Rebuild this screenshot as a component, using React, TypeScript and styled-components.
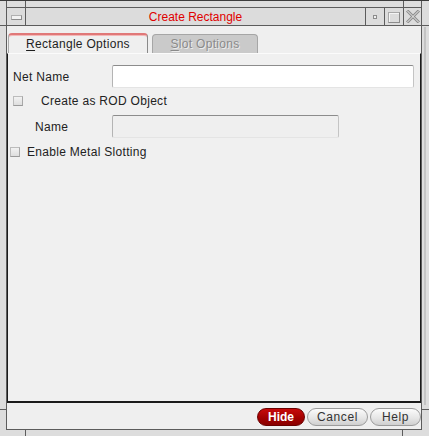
import React from "react";
import styled, { createGlobalStyle } from "styled-components";

const Global = createGlobalStyle`
  html, body { margin: 0; padding: 0; background: #dcdcdc; }
  body { font-family: "Liberation Sans", Arial, sans-serif; font-size: 12px; letter-spacing: 0.3px; }
  * { box-sizing: border-box; }
`;

const tick = (x: string, y: string, w: string, h: string) =>
  `linear-gradient(#5c5c5c, #5c5c5c) ${x} ${y} / ${w} ${h} no-repeat`;

const Window = styled.div`
  width: 429px;
  height: 436px;
  border-top: 1px solid #3c3c3c;
  padding: 6px 7px 6px 6px;
  background:
    ${tick("6px", "0", "1px", "7px")},
    ${tick("25px", "0", "1px", "7px")},
    ${tick("403px", "0", "1px", "7px")},
    ${tick("421px", "0", "1px", "7px")},
    ${tick("0", "24px", "6px", "1px")},
    ${tick("0", "408px", "6px", "1px")},
    ${tick("422px", "24px", "7px", "1px")},
    ${tick("422px", "408px", "7px", "1px")},
    ${tick("25px", "429px", "1px", "7px")},
    ${tick("402px", "429px", "1px", "7px")},
    linear-gradient(#c4c4c4, #c4c4c4) 424px 26px / 2px 378px no-repeat,
    #dddddd;
`;

const Frame = styled.div`
  height: 100%;
  border: 1px solid #5c5c5c;
  display: flex;
  flex-direction: column;
  background: #efefef;
`;

const TitleBar = styled.div`
  height: 18px;
  flex: none;
  display: flex;
  background: #dcdcdc;
  border-bottom: 1px solid #5c5c5c;
`;

const TitleBox = styled.div<{ $left?: boolean; $w: number }>`
  width: ${(p) => p.$w}px;
  flex: none;
  display: flex;
  align-items: center;
  justify-content: center;
  ${(p) => (p.$left ? "border-right: 1px solid #5c5c5c;" : "border-left: 1px solid #5c5c5c;")}
`;

const MenuGlyph = styled.div`
  width: 11px;
  height: 5px;
  margin-top: 1px;
  background: #f2f2f2;
  border: 1px solid #8c8c8c;
  border-top-color: #b0b0b0;
  border-left-color: #b0b0b0;
`;

const MinGlyph = styled.div`
  width: 4px;
  height: 4px;
  margin-top: 1px;
  background: #f0f0f0;
  border: 1px solid #8c8c8c;
`;

const MaxGlyph = styled.div`
  width: 12px;
  height: 11px;
  margin-top: 1px;
  border: 1px solid #8c8c8c;
  border-top-color: #a8a8a8;
  border-left-color: #a8a8a8;
  box-shadow: inset 1px 1px 0 #f4f4f4;
`;

const Title = styled.div`
  flex: 1;
  text-align: center;
  color: #e00000;
  font-size: 12px;
  letter-spacing: 0;
  line-height: 17px;
  padding-top: 1px;
`;

const Body = styled.div`
  flex: 1;
  display: flex;
  flex-direction: column;
  padding-top: 7px;
`;

const TabRow = styled.div`
  height: 20px;
  display: flex;
  align-items: flex-end;
  gap: 4px;
  padding-left: 1px;
`;

const Tab = styled.div<{ $active?: boolean; $w: number }>`
  width: ${(p) => p.$w}px;
  height: ${(p) => (p.$active ? 20 : 19)}px;
  border-radius: 4px 4px 0 0;
  text-align: center;
  font-size: 12px;
  line-height: 18px;
  ${(p) =>
    p.$active
      ? `
    background: #efefef;
    color: #1e1e1e;
    border-top: 2px solid #e07878;
    box-shadow: inset 0 1px 0 #f3b8b8;
    border-left: 1px solid #a8a8a8;
    border-right: 1px solid #8a8a8a;
  `
      : `
    background: #cacaca;
    color: #8a8a8a;
    text-shadow: 1px 1px 0 #ececec;
    border: 1px solid #a6a6a6;
    border-bottom: none;
  `}
`;

const Mn = styled.span`
  text-decoration: underline;
  text-underline-offset: 2px;
`;

const Panel = styled.div`
  height: 350px;
  flex: none;
  background: #f0f0f0;
  border-top: 1px solid #fbfbfb;
  border-left: 1px solid #1a1a1a;
  border-right: 1px solid #1a1a1a;
  border-bottom: 2px solid #1a1a1a;
  padding: 11px 6px 0 5px;
  display: flex;
  flex-direction: column;
`;

const Row = styled.div<{ $h: number; $mt?: number; $indent?: number }>`
  display: flex;
  align-items: center;
  height: ${(p) => p.$h}px;
  margin-top: ${(p) => p.$mt ?? 0}px;
  margin-left: ${(p) => p.$indent ?? 0}px;
`;

const Label = styled.div<{ $w: number }>`
  width: ${(p) => p.$w}px;
  flex: none;
  color: #222222;
  font-size: 12px;
`;

const Input = styled.div<{ $disabled?: boolean; $w?: number }>`
  height: 23px;
  ${(p) => (p.$w ? `width: ${p.$w}px; flex: none;` : "flex: 1;")}
  background: ${(p) => (p.$disabled ? "#efefef" : "#ffffff")};
  border: 1px solid #c4c4c4;
  border-top-color: #8c8c8c;
  border-left-color: #b4b4b4;
  border-bottom-color: #e4e4e4;
  border-radius: 2px;
`;

const Check = styled.div<{ $gap: number }>`
  width: 10px;
  height: 10px;
  flex: none;
  margin-right: ${(p) => p.$gap}px;
  background: linear-gradient(#f2f2f2, #dedede);
  border: 1px solid #bcbcbc;
  border-bottom-color: #9a9a9a;
  border-right-color: #a8a8a8;
`;

const Text = styled.span`
  color: #222222;
  font-size: 12px;
`;

const ButtonRow = styled.div`
  flex: 1;
  display: flex;
  justify-content: flex-end;
  align-items: flex-start;
  gap: 2px;
  padding-top: 5px;
`;

const Button = styled.div<{ $primary?: boolean; $w: number }>`
  width: ${(p) => p.$w}px;
  height: 18px;
  border-radius: 9px;
  display: flex;
  align-items: center;
  justify-content: center;
  font-size: 12px;
  ${(p) =>
    p.$primary
      ? `
    background: linear-gradient(#c80a0a, #a00000 60%, #8a0000);
    border: 1px solid #6a0000;
    color: #ffffff;
    font-weight: bold;
    letter-spacing: 0;
  `
      : `
    background: linear-gradient(#fbfbfb, #e4e4e4 60%, #cfcfcf);
    border: 1px solid #9c9c9c;
    color: #333333;
    letter-spacing: 0.6px;
  `}
`;

function CloseGlyph() {
  return (
    <svg width="14" height="13" viewBox="0 0 14 13">
      <path d="M1 0.5 L13 12.5 M13 0.5 L1 12.5" stroke="#8c8c8c" strokeWidth="3" />
      <path d="M1 0.5 L13 12.5 M13 0.5 L1 12.5" stroke="#eeeeee" strokeWidth="1" />
    </svg>
  );
}

export default function App() {
  return (
    <>
      <Global />
      <Window>
        <Frame>
          <TitleBar>
            <TitleBox $left $w={19}>
              <MenuGlyph />
            </TitleBox>
            <Title>Create Rectangle</Title>
            <TitleBox $w={19}>
              <MinGlyph />
            </TitleBox>
            <TitleBox $w={19}>
              <MaxGlyph />
            </TitleBox>
            <TitleBox $w={18}>
              <CloseGlyph />
            </TitleBox>
          </TitleBar>
          <Body>
            <TabRow>
              <Tab $active $w={140}>
                <Mn>R</Mn>ectangle Options
              </Tab>
              <Tab $w={106}>
                <Mn>S</Mn>lot Options
              </Tab>
            </TabRow>
            <Panel>
              <Row $h={23}>
                <Label $w={99}>Net Name</Label>
                <Input />
              </Row>
              <Row $h={20} $mt={3}>
                <Check $gap={18} />
                <Text>Create as ROD Object</Text>
              </Row>
              <Row $h={23} $mt={4} $indent={22}>
                <Label $w={77}>Name</Label>
                <Input $disabled $w={227} />
              </Row>
              <Row $h={20} $mt={4} $indent={-3}>
                <Check $gap={7} />
                <Text>Enable Metal Slotting</Text>
              </Row>
            </Panel>
            <ButtonRow>
              <Button $primary $w={48}>Hide</Button>
              <Button $w={61}>Cancel</Button>
              <Button $w={51}>Help</Button>
            </ButtonRow>
          </Body>
        </Frame>
      </Window>
    </>
  );
}
